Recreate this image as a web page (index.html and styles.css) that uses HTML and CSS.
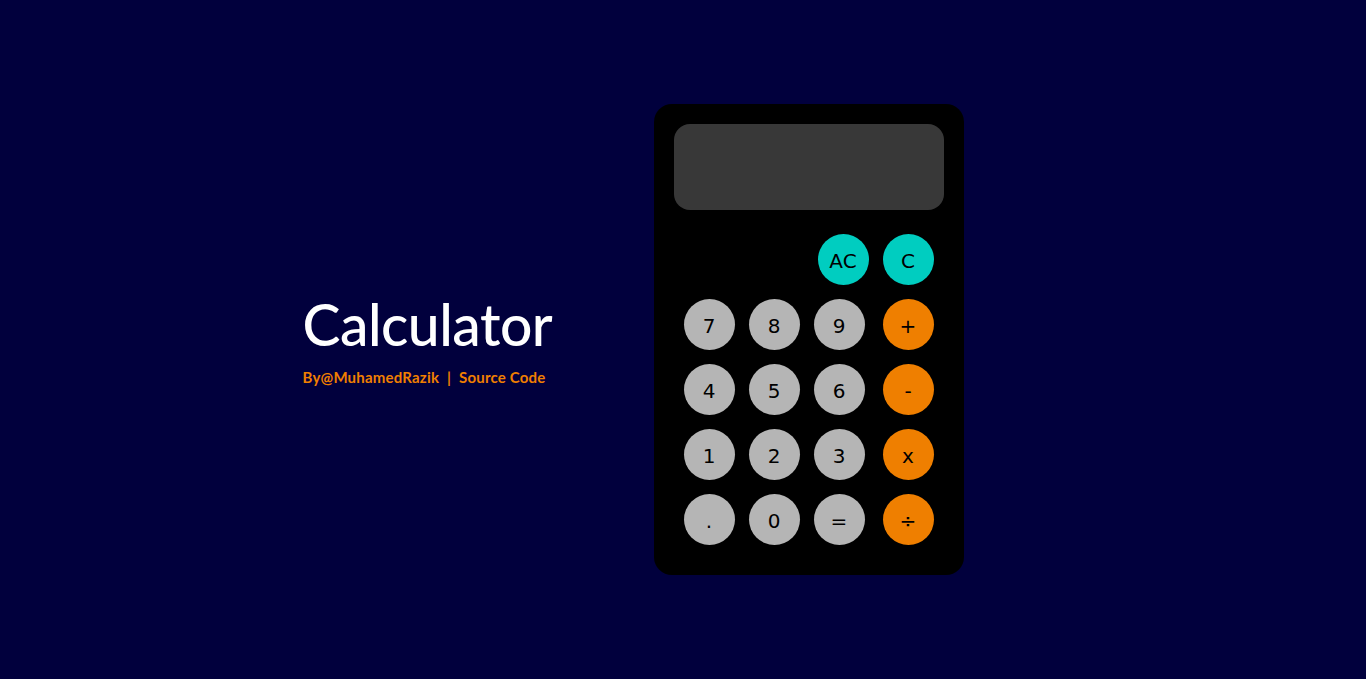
FILE: index.html
```html
<!DOCTYPE html>
<html lang="en">
<head>
<meta charset="utf-8">
<title>Calculator</title>
<link rel="stylesheet" href="styles.css">
</head>
<body>
<main class="page">
  <section class="intro">
    <h1 class="title">Calculator</h1>
    <p class="byline">By@MuhamedRazik <span class="sep">|</span> Source Code</p>
  </section>
  <section class="calc">
    <div class="display"></div>
    <div class="keys">
      <div class="row row-top">
        <button class="key teal">AC</button>
        <button class="key teal">C</button>
      </div>
      <div class="row">
        <button class="key gray">7</button>
        <button class="key gray">8</button>
        <button class="key gray">9</button>
        <button class="key orange">+</button>
      </div>
      <div class="row">
        <button class="key gray">4</button>
        <button class="key gray">5</button>
        <button class="key gray">6</button>
        <button class="key orange">-</button>
      </div>
      <div class="row">
        <button class="key gray">1</button>
        <button class="key gray">2</button>
        <button class="key gray">3</button>
        <button class="key orange">x</button>
      </div>
      <div class="row">
        <button class="key gray">.</button>
        <button class="key gray">0</button>
        <button class="key gray">=</button>
        <button class="key orange">÷</button>
      </div>
    </div>
  </section>
</main>
</body>
</html>
```

FILE: styles.css
```css
* { box-sizing: border-box; }
html, body { margin: 0; padding: 0; }
body {
  background: #01003d;
  font-family: "Lato", "Noto Sans", sans-serif;
  height: 679px;
  overflow: hidden;
}
.page {
  height: 679px;
  display: flex;
  align-items: center;
  justify-content: center;
  padding-right: 100px;
}
.intro {
  width: 247px;
  margin-right: 104px;
}
.title {
  margin: 0;
  color: #ffffff;
  font-weight: 500;
  font-size: 57px;
  line-height: 60px;
  letter-spacing: -0.5px;
  white-space: nowrap;
}
.byline {
  margin: 14px 0 0;
  color: #f07f00;
  font-weight: 700;
  font-size: 15px;
  letter-spacing: 0.2px;
  white-space: nowrap;
}
.sep { margin: 0 4px; }
.calc {
  width: 310px;
  height: 471px;
  background: #000000;
  border-radius: 18px;
  padding: 20px 20px 30px;
}
.display {
  height: 86px;
  background: #383838;
  border-radius: 16px;
}
.keys {
  padding: 24px 10px 0;
  display: flex;
  flex-direction: column;
  gap: 14px;
}
.row {
  display: flex;
}
.row-top { justify-content: flex-end; }
.row-top .key:first-child { margin-right: 14px; }
.row .key + .key { margin-left: 14px; }
.row .key.orange { margin-left: 18px; }
.row-top .key + .key { margin-left: 0; }
.key {
  width: 51px;
  height: 51px;
  border-radius: 50%;
  border: none;
  padding: 2px 0 0;
  font-family: "DejaVu Sans", sans-serif;
  font-size: 20px;
  color: #000;
  display: flex;
  align-items: center;
  justify-content: center;
}
.teal { background: #00cdc0; }
.gray { background: #b5b5b5; }
.orange { background: #ef7f00; }
```
